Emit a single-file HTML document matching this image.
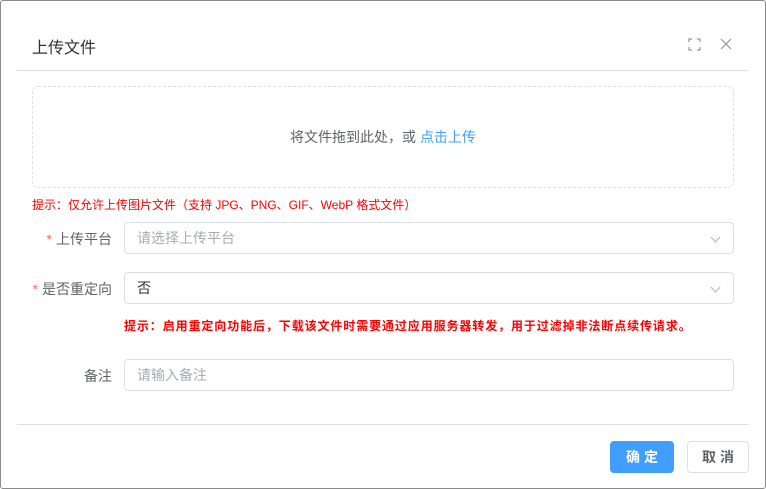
<!DOCTYPE html>
<html><head><meta charset="utf-8"><style>
*{box-sizing:border-box;margin:0;padding:0}
body{width:766px;height:489px;background:#fff;font-family:"Liberation Sans","Noto Sans CJK SC",sans-serif;position:relative;overflow:hidden}
.frame{position:absolute;left:0;top:0;width:766px;height:489px;border:1px solid #8a8a8a;border-radius:3px;pointer-events:none}
.a{position:absolute}
.title{left:32px;top:34px;font-size:16px;color:#303133}
.hr{left:17px;width:732px;height:1px;background:#dcdfe6}
.drop{left:32px;top:86px;width:702px;height:102px;border:1px dashed #dcdfe6;border-radius:6px;text-align:center;line-height:100px;font-size:14px;color:#606266}
.red{color:#f00;font-size:12px;font-weight:bold}
.lab{font-size:14px;color:#606266;text-align:right;width:100px;left:12px}
.lab i{color:#f56c6c;font-style:normal;margin-right:4px}
.inp{left:124px;width:610px;height:32px;border:1px solid #dcdfe6;border-radius:4px;font-size:14px;line-height:30px;padding-left:12px;color:#a8abb2}
.arr{position:absolute;right:14px;top:11px;width:7px;height:7px;border-right:1px solid #b0b3b8;border-bottom:1px solid #b0b3b8;transform:rotate(45deg)}
.btn{top:441px;height:32px;border-radius:4px;font-size:14px;font-weight:bold;text-align:center;line-height:30px;letter-spacing:4px;text-indent:4px}
</style></head><body>
<div class="a title">上传文件</div>
<svg class="a" style="left:688px;top:38px" width="13" height="13" viewBox="0 0 13 13" fill="none" stroke="#909399" stroke-width="1.2"><path d="M1 4V1h3M9 1h3v3M12 9v3H9M4 12H1V9"/></svg>
<svg class="a" style="left:720px;top:38px" width="12" height="12" viewBox="0 0 12 12" stroke="#909399" stroke-width="1.2"><path d="M1 1l10 10M11 1L1 11"/></svg>
<div class="a hr" style="top:70px"></div>
<div class="a drop">将文件拖到此处，或 <span style="color:#409eff">点击上传</span></div>
<div class="a red" style="left:32px;top:196px;font-weight:normal">提示：仅允许上传图片文件（支持 JPG、PNG、GIF、WebP 格式文件）</div>
<div class="a lab" style="top:229px"><i>*</i>上传平台</div>
<div class="a inp" style="top:222px">请选择上传平台<span class="arr"></span></div>
<div class="a lab" style="top:279px"><i>*</i>是否重定向</div>
<div class="a inp" style="top:272px;color:#303133">否<span class="arr"></span></div>
<div class="a red" style="left:124px;top:317px;letter-spacing:0.9px">提示：启用重定向功能后，下载该文件时需要通过应用服务器转发，用于过滤掉非法断点续传请求。</div>
<div class="a lab" style="top:366px">备注</div>
<div class="a inp" style="top:359px">请输入备注</div>
<div class="a hr" style="top:424px"></div>
<div class="a btn" style="left:610px;width:64px;background:#409eff;color:#fff;border:1px solid #409eff">确定</div>
<div class="a btn" style="left:687px;width:62px;background:#fff;color:#606266;border:1px solid #dcdfe6">取消</div>
<div class="frame"></div>
</body></html>
